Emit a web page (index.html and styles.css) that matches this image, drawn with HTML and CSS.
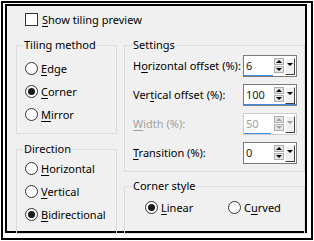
FILE: index.html
```html
<!DOCTYPE html>
<html lang="en">

<head>
    <meta charset="UTF-8">
    <title>Tiling</title>
    <link rel="stylesheet" href="styles.css">
</head>

<body>
    <div class="frame">
        <div class="dialog">
            <label class="check"><span class="box"></span><span><u>S</u>how tiling preview</span></label>

            <div class="cols">
                <div class="col left">
                    <fieldset class="group method">
                        <legend>Tiling method</legend>
                        <div class="radio"><span class="dot"></span><span><u>E</u>dge</span></div>
                        <div class="radio on"><span class="dot"></span><span><u>C</u>orner</span></div>
                        <div class="radio"><span class="dot"></span><span><u>M</u>irror</span></div>
                    </fieldset>

                    <fieldset class="group direction">
                        <legend>Direction</legend>
                        <div class="radio"><span class="dot"></span><span><u>H</u>orizontal</span></div>
                        <div class="radio"><span class="dot"></span><span><u>V</u>ertical</span></div>
                        <div class="radio on"><span class="dot"></span><span><u>B</u>idirectional</span></div>
                    </fieldset>
                </div>

                <div class="col right">
                    <fieldset class="group settings">
                        <legend>Settings</legend>
                        <div class="row">
                            <span class="lbl">H<u>o</u>rizontal offset (%):</span>
                            <div class="spin">
                                <div class="spin-row">
                                    <span class="val">6</span>
                                    <span class="arrows"><span class="arr up"></span><span class="arr down"></span></span>
                                    <span class="drop"></span>
                                </div>
                                <div class="bar" style="width: 29px"></div>
                            </div>
                        </div>
                        <div class="row">
                            <span class="lbl">Ver<u>t</u>ical offset (%):</span>
                            <div class="spin">
                                <div class="spin-row">
                                    <span class="val">100</span>
                                    <span class="arrows"><span class="arr up"></span><span class="arr down"></span></span>
                                    <span class="drop"></span>
                                </div>
                                <div class="bar" style="width: 100%"></div>
                            </div>
                        </div>
                        <div class="row off">
                            <span class="lbl"><u>W</u>idth (%):</span>
                            <div class="spin">
                                <div class="spin-row">
                                    <span class="val">50</span>
                                    <span class="arrows"><span class="arr up"></span><span class="arr down"></span></span>
                                    <span class="drop"></span>
                                </div>
                                <div class="bar" style="width: 27px"></div>
                            </div>
                        </div>
                        <div class="row">
                            <span class="lbl"><u>T</u>ransition (%):</span>
                            <div class="spin">
                                <div class="spin-row">
                                    <span class="val">0</span>
                                    <span class="arrows"><span class="arr up"></span><span class="arr down"></span></span>
                                    <span class="drop"></span>
                                </div>
                                <div class="bar" style="width: 0"></div>
                            </div>
                        </div>
                    </fieldset>

                    <fieldset class="group corner">
                        <legend>Corner style</legend>
                        <div class="pair">
                            <div class="radio on"><span class="dot"></span><span><u>L</u>inear</span></div>
                            <div class="radio"><span class="dot"></span><span>C<u>u</u>rved</span></div>
                        </div>
                    </fieldset>
                </div>
            </div>
        </div>
    </div>
</body>

</html>
```

FILE: styles.css
```css
* {
    box-sizing: border-box;
}

body {
    margin: 0;
    background: #ffffff;
    font-family: 'Noto Sans', sans-serif;
    font-size: 11px;
    line-height: 16px;
    color: #000000;
}

u {
    text-decoration-thickness: 1px;
    text-underline-offset: 2px;
}

.frame {
    margin: 1px;
    width: 312px;
    height: 239px;
    border: 2px solid #000000;
    padding: 1px 4px 5px 2px;
}

.dialog {
    height: 100%;
    border: 2px solid #000000;
    background: #f0f0f0;
    padding: 7px 0 0 9px;
    display: flex;
    flex-direction: column;
}

/* checkbox */

.check {
    display: flex;
    align-items: center;
    gap: 4px;
    height: 13px;
    margin-left: 9px;
}

.box {
    width: 13px;
    height: 13px;
    border: 1px solid #333333;
    background: #ffffff;
}

.cols {
    flex: 1;
    display: flex;
    gap: 7px;
    margin-top: 11px;
}

.col {
    display: flex;
    flex-direction: column;
}

.left {
    width: 101px;
}

.right {
    width: 181px;
}

/* group boxes */

.group {
    margin: 0;
    min-width: 0;
    border: 1px solid #dcdcdc;
    padding: 0 6px 7px;
}

.group legend {
    padding: 0 1px;
    height: 16px;
}

.method {
    padding-top: 4px;
}

.direction {
    flex: 1;
    margin-top: 7px;
}

.settings {
    padding: 2px 7px 7px 7px;
}

.corner {
    flex: 1;
    margin-top: 6px;
    padding: 2px 7px 0 7px;
}

/* radios */

.radio {
    display: flex;
    align-items: center;
    gap: 3px;
    height: 23px;
    padding-left: 2px;
}

.dot {
    width: 13px;
    height: 13px;
    border: 1px solid #333333;
    border-radius: 50%;
    background: #ffffff;
    display: flex;
    align-items: center;
    justify-content: center;
}

.radio.on .dot::after {
    content: "";
    width: 7px;
    height: 7px;
    border-radius: 50%;
    background: #1a1a1a;
}

.pair {
    display: grid;
    grid-template-columns: 83px 83px;
    padding-left: 13px;
}

.pair .radio {
    padding-left: 0;
}

/* spin rows */

.row {
    display: grid;
    grid-template-columns: 1fr 54px;
    align-items: center;
    height: 22px;
    margin-bottom: 7px;
    padding-left: 1px;
}

.row:last-child {
    margin-bottom: 0;
}

.spin {
    height: 22px;
    border: 1px solid #7a7a7a;
    background: #ffffff;
    display: flex;
    flex-direction: column;
}

.spin-row {
    flex: 1;
    display: flex;
    padding: 1px 0 0 2px;
}

.val {
    flex: 1;
    line-height: 18px;
    color: #1a1a1a;
}

.arrows {
    display: flex;
    flex-direction: column;
    gap: 1px;
    width: 10px;
    margin-top: 1px;
    margin-right: 1px;
}

.arr {
    height: 7px;
    background: #e6e6e6;
    border: 1px solid #adadad;
    display: flex;
    align-items: center;
    justify-content: center;
}

.arr::after {
    content: "";
    border-left: 3px solid transparent;
    border-right: 3px solid transparent;
}

.arr.up::after {
    border-bottom: 3px solid #000000;
}

.arr.down::after {
    border-top: 3px solid #000000;
}

.drop {
    width: 10px;
    margin: 1px 1px 0 0;
    background: #f0f0f0;
    border: 1px solid;
    border-color: #ffffff #404040 #404040 #ffffff;
    display: flex;
    align-items: flex-start;
    justify-content: center;
    padding-top: 4px;
}

.drop::after {
    content: "";
    border-left: 3px solid transparent;
    border-right: 3px solid transparent;
    border-top: 3px solid #000000;
}

.bar {
    height: 2px;
    background: #3d8ee6;
}

.row.off .lbl,
.row.off .val {
    color: #a0a0a0;
}

.row.off .spin {
    border-color: #cccccc;
}

.row.off .arr::after,
.row.off .drop::after {
    border-top-color: #a0a0a0;
    border-bottom-color: #a0a0a0;
}
```
